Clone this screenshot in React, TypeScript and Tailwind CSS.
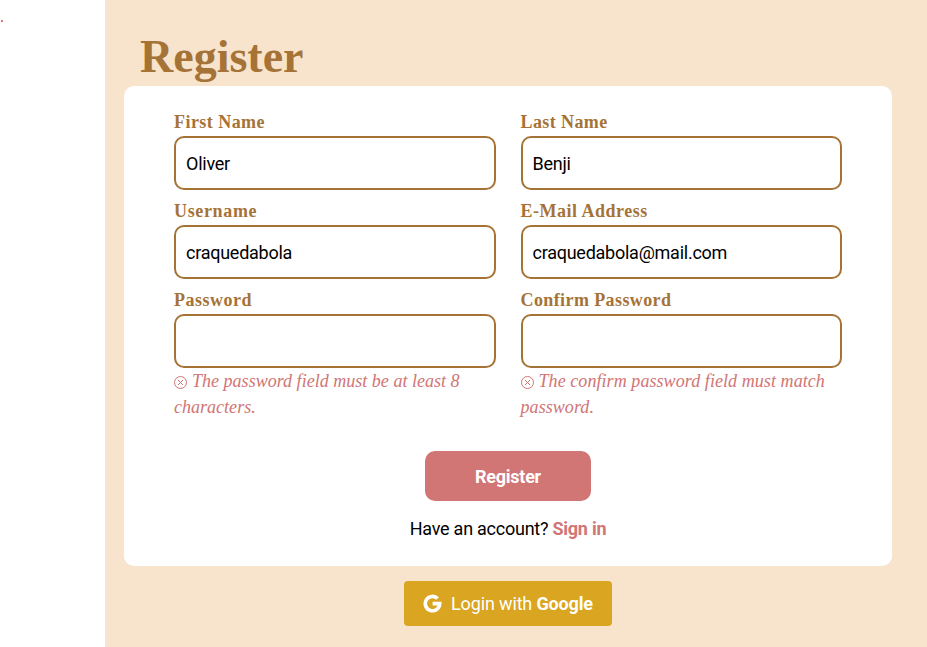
import React from "react";

type FieldProps = {
  label: string;
  value: string;
  labelClass: string;
  error?: string;
  errorClass?: string;
};

function ErrorIcon() {
  return (
    <svg width="14" height="14" viewBox="0 0 14 14" fill="none" stroke="currentColor" className="mr-1 inline-block align-[-3px]">
      <circle cx="6.5" cy="6.5" r="6" />
      <path d="M4 4l5 5m0-5l-5 5" />
    </svg>
  );
}

function GoogleIcon() {
  return (
    <svg width="19" height="19" viewBox="0 0 19 19" fill="none" stroke="currentColor" strokeWidth="3.6" className="mb-px mr-[9px]">
      <path d="M14.7 4.6A7.2 7.2 0 1 0 16.7 9.6H9.6" />
    </svg>
  );
}

function Field({ label, value, labelClass, error, errorClass = "" }: FieldProps) {
  return (
    <div className="flex flex-col">
      <label className={`h-[27px] whitespace-nowrap font-['Liberation_Serif',serif] text-[18px] font-bold leading-[27px] text-[#a67337] ${labelClass}`}>
        {label}
      </label>
      <input
        readOnly
        value={value}
        className="h-[54px] w-full rounded-[10px] border-2 border-[#a67337] bg-white px-2.5 font-[Roboto,sans-serif] text-[18px] tracking-[-0.25px] text-black outline-none"
      />
      {error && (
        <p className={`font-['Liberation_Serif',serif] text-[18px] italic leading-[26px] text-[#d17575] ${errorClass}`}>
          <ErrorIcon />
          {error}
        </p>
      )}
    </div>
  );
}

export default function App() {
  return (
    <div className="flex h-[647px] w-[927px] overflow-hidden bg-white font-[Roboto,sans-serif] text-[18px]">
      <aside className="w-[105px] shrink-0 pl-px pt-5">
        <div className="size-0.5 bg-[#e87575]" />
      </aside>
      <main className="flex h-full grow flex-col bg-[#f8e4cd] pl-[19px] pr-[35px] pt-[28px]">
        <h1 className="h-[58px] pl-4 font-['Liberation_Serif',serif] text-[46px] font-bold leading-[58px] text-[#a67337]">Register</h1>
        <section className="flex h-[480px] flex-col items-center rounded-[10px] bg-white px-[50px] pt-[23px]">
          <div className="grid w-full grid-cols-2 gap-x-[25px] gap-y-2">
            <Field label="First Name" value="Oliver" labelClass="tracking-[0.45px]" />
            <Field label="Last Name" value="Benji" labelClass="tracking-[0.4px]" />
            <Field label="Username" value="craquedabola" labelClass="tracking-[0.65px]" />
            <Field label="E-Mail Address" value="craquedabola@mail.com" labelClass="tracking-[0.5px]" />
            <Field label="Password" value="" labelClass="tracking-[0.5px]" error="The password field must be at least 8 characters." errorClass="pr-5 tracking-[0.02px]" />
            <Field
              label="Confirm Password"
              value=""
              labelClass="tracking-[0.4px]"
              error="The confirm password field must match password."
              errorClass="tracking-[0.07px]"
            />
          </div>
          <button className="mt-[31px] h-[50px] w-[166px] rounded-[10px] bg-[#d17575] font-bold tracking-[-0.25px] text-white">Register</button>
          <p className="mt-[14px] leading-[27px] tracking-[-0.25px] text-black">
            Have an account? <a className="font-bold text-[#d17575]">Sign in</a>
          </p>
        </section>
        <button className="mt-[15px] flex h-[45px] w-[208px] items-center justify-center self-center rounded-[4px] bg-[#daa520] tracking-[-0.15px] text-white">
          <GoogleIcon />
          <span>Login with <b>Google</b></span>
        </button>
      </main>
    </div>
  );
}
